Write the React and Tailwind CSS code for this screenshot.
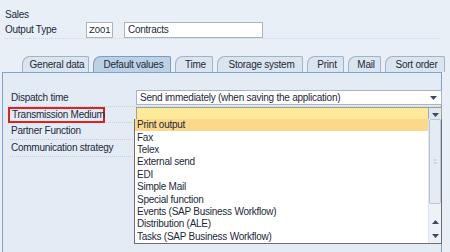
import React from 'react';

const items = [
  'Print output',
  'Fax',
  'Telex',
  'External send',
  'EDI',
  'Simple Mail',
  'Special function',
  'Events (SAP Business Workflow)',
  'Distribution (ALE)',
  'Tasks (SAP Business Workflow)',
];

const tabs = [
  { label: 'General data', w: 'w-[67px]' },
  { label: 'Default values', w: 'w-[78px]', active: true },
  { label: 'Time', w: 'w-[38px]' },
  { label: 'Storage system', w: 'w-[86px]' },
  { label: 'Print', w: 'w-[37px]' },
  { label: 'Mail', w: 'w-[33px]' },
  { label: 'Sort order', w: 'w-[60px]' },
];

const Arrow = ({ up }) => (
  <svg width="7" height="4" viewBox="0 0 7 4">
    <path d={up ? 'M0 4 L3.5 0 L7 4 Z' : 'M0 0 L7 0 L3.5 4 Z'} fill="#3b4a5e" />
  </svg>
);

const Tab = ({ label, w, active }) => (
  <div
    className={`${w} h-[16px] flex items-center justify-center pl-[3px] border border-b-0 rounded-tl-[8px] rounded-tr-[2px] ${
      active ? 'bg-[#bcd0e6] border-[#7e9cbd]' : 'bg-[#dbe5f0] border-[#9fb3ca]'
    }`}
  >
    {label}
  </div>
);

const Row = ({ children }) => (
  <div className="h-[16.7px] flex items-center border-b border-dotted border-[#c4cedb] whitespace-nowrap">{children}</div>
);

const App = () => {
  return (
    <div className="relative w-[450px] h-[252px] overflow-hidden bg-[#e9eff7] text-[10px] tracking-[-0.25px] leading-none text-[#1d2a3a] font-['Liberation_Sans',sans-serif]">
      <div className="pl-[5px] pt-[8px]">
        <div className="h-[14px] flex items-center">Sales</div>
        <div className="h-[17px] flex items-center border-b border-dotted border-[#cdd6e1] mr-[10px]">
          <span className="w-[81px]">Output Type</span>
          <div className="w-[27px] h-[16px] bg-white border border-[#a8b4c2] flex items-center pl-[2px] text-[9.5px] tracking-normal">Z001</div>
          <div className="ml-[11px] w-[139px] h-[16px] bg-white border border-[#a8b4c2] flex items-center pl-[3px]">Contracts</div>
        </div>
      </div>

      <div className="flex gap-[4px] pl-[22px] mt-[17px]">
        {tabs.map((t) => (
          <Tab key={t.label} {...t} />
        ))}
      </div>

      <div className="ml-[2px] w-[440px] h-[190px] bg-[#e3ebf5] border-t border-l border-r border-[#7fa3cc] pt-[17px] pl-[7px]">
        <Row>
          <span className="w-[126px] shrink-0 pl-[1px]">Dispatch time</span>
          <div className="w-[306px] shrink-0 h-[15px] bg-white border border-[#a8b4c2] flex items-center pl-[3px] pr-[4px]">
            <span className="flex-1">Send immediately (when saving the application)</span>
            <Arrow />
          </div>
        </Row>
        <Row>
          <span className="w-[126px] shrink-0 h-[16px] flex items-center">
            <span className="border-2 border-[#e0201c] w-[97px] shrink-0 pl-[2px] h-[16px] flex items-center -ml-[2px]">Transmission Medium</span>
          </span>
          <div className="w-[306px] shrink-0 h-[15px] bg-[#fde99a] border border-[#a8a08a] flex items-center justify-end">
            <div className="w-[13px] h-[13px] bg-[#dfe7f1] border-l border-[#9aa9bb] flex items-center justify-center">
              <Arrow />
            </div>
          </div>
        </Row>
        <Row>
          <span className="pl-[1px]">Partner Function</span>
        </Row>
        <Row>
          <span className="pl-[1px]">Communication strategy</span>
        </Row>
      </div>

      <div className="absolute left-[134px] top-[119px] w-[308px] h-[125px] bg-white border border-t-0 border-[#6b6f75] flex">
        <div className="flex-1 flex flex-col">
          {items.map((it, i) => (
            <div
              key={it}
              className={`h-[12.4px] flex items-center pl-[2px] ${i === 0 ? 'bg-[#fbd98a]' : ''}`}
            >
              {it}
            </div>
          ))}
        </div>
        <div className="w-[13px] flex flex-col bg-[#eef2f7] border-l border-[#dde4ec]">
          <div className="h-[85px] bg-[#e4ebf3] border border-[#b9c6d5] rounded-[2px] flex items-center justify-center text-[7px] text-[#a9b6c6]">
            ⁞⁞
          </div>
          <div className="flex-1" />
          <div className="h-[14px] flex items-center justify-center">
            <Arrow up />
          </div>
          <div className="h-[14px] flex items-center justify-center">
            <Arrow />
          </div>
        </div>
      </div>
    </div>
  );
};

export default App;
